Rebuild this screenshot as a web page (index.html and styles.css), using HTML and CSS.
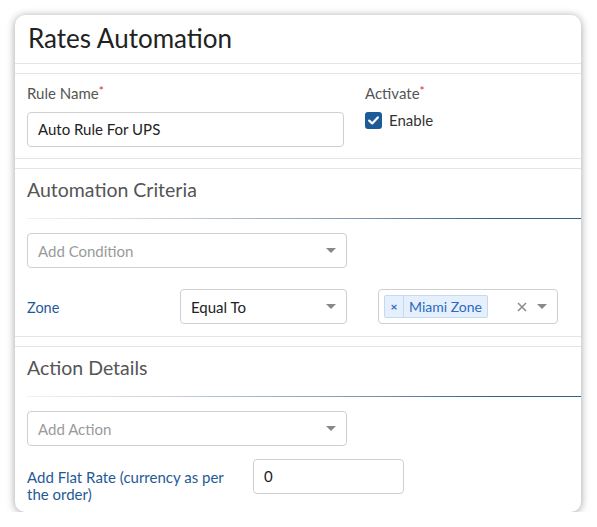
FILE: index.html
```html
<!DOCTYPE html>
<html>
<head>
<meta charset="utf-8">
<link rel="stylesheet" href="styles.css">
</head>
<body>
<div class="card">
  <div class="header"><h1 class="title">Rates Automation</h1></div>

  <div class="section general">
    <div class="field">
      <div class="label">Rule Name<span class="req">*</span></div>
      <div class="input">Auto Rule For UPS</div>
    </div>
    <div class="field">
      <div class="label">Activate<span class="req">*</span></div>
      <div class="check-row">
        <span class="checkbox"><svg width="11" height="9" viewBox="0 0 11 9"><path d="M1.2 4.6 L4.2 7.4 L9.8 1.4" fill="none" stroke="#fff" stroke-width="2.2" stroke-linecap="round" stroke-linejoin="round"/></svg></span>
        <span class="check-text">Enable</span>
      </div>
    </div>
  </div>

  <div class="section">
    <div class="sec-head">
      <h2 class="sec-title">Automation Criteria</h2>
    </div>
    <div class="rule"></div>
    <div class="sec-body">
      <div class="select wide placeholder"><span>Add Condition</span><span class="caret"></span></div>
      <div class="cond-row">
        <div class="blue-label zone">Zone</div>
        <div class="select op"><span>Equal To</span><span class="caret"></span></div>
        <div class="select multi">
          <span class="tag"><span class="tag-x">×</span><span class="tag-text">Miami Zone</span></span>
          <span class="tools"><svg class="clear" width="10" height="10" viewBox="0 0 10 10"><path d="M1 1 L9 9 M9 1 L1 9" stroke="#8a8a8a" stroke-width="1.5" fill="none"/></svg><span class="caret"></span></span>
        </div>
      </div>
    </div>
  </div>

  <div class="section last">
    <div class="sec-head">
      <h2 class="sec-title">Action Details</h2>
    </div>
    <div class="rule"></div>
    <div class="sec-body">
      <div class="select wide placeholder"><span>Add Action</span><span class="caret"></span></div>
      <div class="rate-row">
        <div class="blue-label rate-label">Add Flat Rate (currency as per the order)</div>
        <div class="input rate">0</div>
      </div>
    </div>
  </div>
</div>
</body>
</html>
```

FILE: styles.css
```css
* { box-sizing: border-box; }
html, body { margin: 0; padding: 0; background: #fff; }
body {
  padding: 15px 0 0 15px;
  font-family: Lato, "Open Sans", Arial, sans-serif;
  color: #333;
}
.card {
  width: 566px;
  height: 497px;
  background: #fff;
  border-radius: 10px;
  box-shadow: 0 1px 9px rgba(0, 0, 0, 0.38);
  overflow: hidden;
}
.header {
  padding: 8px 12px 10px 13px;
  border-bottom: 1px solid #e4e4e4;
}
.title {
  margin: 0;
  font-size: 26px;
  line-height: 30px;
  font-weight: 400;
  color: #222;
}
.section {
  margin-top: 9px;
  border-top: 1px solid #e4e4e4;
  border-bottom: 1px solid #e4e4e4;
}
.section.last { border-bottom: none; }
.general {
  display: grid;
  grid-template-columns: 317px 1fr;
  column-gap: 21px;
  padding: 10px 12px 11px 12px;
}
.label {
  font-size: 15px;
  line-height: 18px;
  color: #555;
  margin-bottom: 10px;
}
.req { color: #d0312d; font-size: 12px; vertical-align: top; line-height: 14px; }
.input {
  height: 35px;
  border: 1px solid #cfcfcf;
  border-radius: 4px;
  padding: 0 10px;
  font-size: 15px;
  line-height: 33px;
  color: #222;
}
.check-row {
  display: flex;
  align-items: center;
  gap: 7px;
  height: 20px;
  margin-top: -2px;
}
.checkbox {
  width: 17px;
  height: 17px;
  border-radius: 3px;
  background: #1d5a98;
  display: flex;
  align-items: center;
  justify-content: center;
}
.check-text { font-size: 15px; color: #333; }
.sec-head { padding: 9px 12px 17px 12px; }
.sec-title {
  margin: 0;
  font-size: 19.5px;
  line-height: 23px;
  font-weight: 400;
  color: #555;
}
.rule {
  margin-left: 12px;
  height: 1px;
  background: linear-gradient(to right, #f2f2f2 0%, #c9d3dc 25%, #7f98b0 60%, #2f5f8c 85%, #34628d 100%);
}
.sec-body { padding: 14px 12px 12px 12px; }
.last .sec-body { padding-bottom: 9px; }
.select {
  height: 35px;
  border: 1px solid #cfcfcf;
  border-radius: 4px;
  padding: 0 10px 0 10px;
  display: flex;
  align-items: center;
  justify-content: space-between;
  font-size: 15px;
  color: #222;
}
.select.wide { width: 320px; }
.placeholder { color: #9a9a9a; }
.caret {
  width: 0;
  height: 0;
  border-left: 5px solid transparent;
  border-right: 5px solid transparent;
  border-top: 5px solid #888;
}
.cond-row {
  display: grid;
  grid-template-columns: 153px 167px 211px;
  margin-top: 21px;
  align-items: center;
}
.multi { margin-left: 31px; width: 180px; padding-left: 5px; padding-right: 10px; }
.blue-label { color: #1f5a96; font-size: 14px; }
.zone { font-size: 14.5px; padding-top: 2px; }
.tag {
  display: flex;
  height: 23px;
  background: #e6f0fc;
  border: 1px solid #c3daf3;
  border-radius: 2px;
  color: #2a6abf;
  align-items: stretch;
  white-space: nowrap;
}
.tag-x {
  width: 19px;
  border-right: 1px solid #c3daf3;
  display: flex;
  align-items: center;
  justify-content: center;
  font-size: 12px;
  font-weight: 700;
}
.tag-text {
  display: flex;
  align-items: center;
  padding: 0 5px 0 5px;
  font-size: 14px;
}
.tools { display: flex; align-items: center; gap: 10px; }
.clear { display: block; }
.rate-row {
  display: grid;
  grid-template-columns: 226px 151px;
  margin-top: 13px;
  align-items: start;
}
.rate-label {
  font-size: 15px;
  line-height: 17px;
  padding-top: 10px;
  padding-right: 24px;
}
.rate { padding-left: 10px; }
```
